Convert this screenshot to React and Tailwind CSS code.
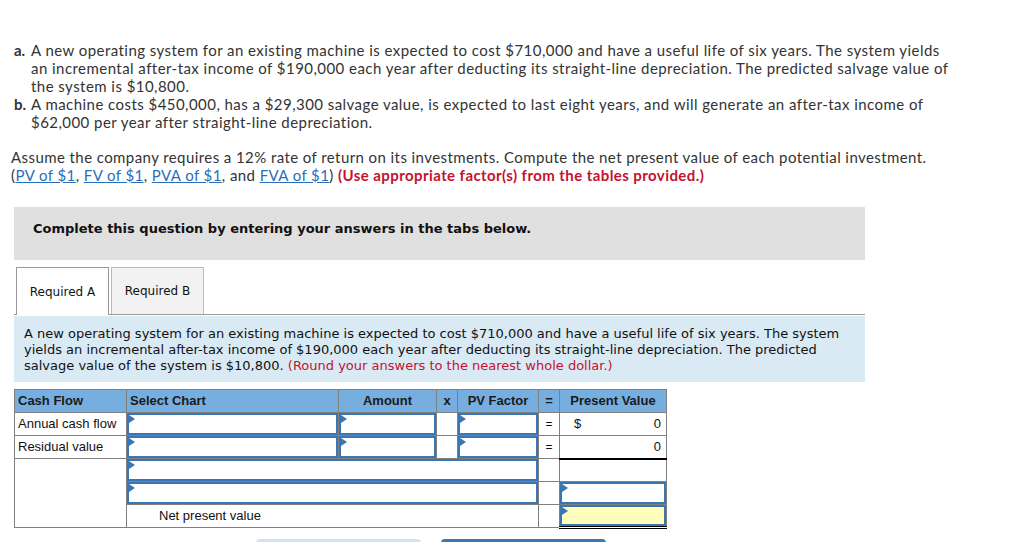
import React from 'react'

const Flag = () => (
    <span className="absolute left-0 top-0 w-0 h-0 border-t-[4px] border-b-[4px] border-l-[6px] border-t-transparent border-b-transparent border-l-[#3a76b3]" />
)

const Field = ({ yellow }) => (
    <div className={`relative h-full w-full border-2 border-[#3a76b3] ${yellow ? 'bg-[#ffffbb]' : 'bg-white'}`}>
        <Flag />
    </div>
)

const Link = ({ children }) => (
    <span className="text-[#2a6ebb] underline">{children}</span>
)

export default function App() {
    const cell = 'border border-[#808080] p-0 h-[23px]'
    return (
        <div className="w-[1009px] h-[542px] overflow-hidden bg-white text-[#333] relative">
            <div className="pt-[41px] pl-[14px] font-['Lato',sans-serif] text-[15px] leading-[18px] tracking-[0.45px] whitespace-nowrap">
                <div className="flex">
                    <span className="font-bold w-[17px] tracking-normal">a.</span>
                    <div>
                        A new operating system for an existing machine is expected to cost $710,000 and have a useful life of six years. The system yields<br />
                        an incremental after-tax income of $190,000 each year after deducting its straight-line depreciation. The predicted salvage value of<br />
                        the system is $10,800.
                    </div>
                </div>
                <div className="flex">
                    <span className="font-bold w-[17px] tracking-normal">b.</span>
                    <div>
                        A machine costs $450,000, has a $29,300 salvage value, is expected to last eight years, and will generate an after-tax income of<br />
                        $62,000 per year after straight-line depreciation.
                    </div>
                </div>
            </div>
            <div className="mt-[17px] pl-[11px] font-['Lato',sans-serif] text-[15px] leading-[18px] tracking-[0.42px] whitespace-nowrap">
                Assume the company requires a 12% rate of return on its investments. Compute the net present value of each potential investment.<br />
                (<Link>PV of $1</Link>, <Link>FV of $1</Link>, <Link>PVA of $1</Link>, and <Link>FVA of $1</Link>) <span className="font-bold text-[#c41230]">(Use appropriate factor(s) from the tables provided.)</span>
            </div>

            <div className="ml-[14px] mt-[23px] w-[851px] h-[53px] bg-[#e0e0e0] pl-[19px] pt-[14px] font-['DejaVu_Sans',sans-serif] font-bold text-[13px] leading-[16px] text-[#111]">
                Complete this question by entering your answers in the tabs below.
            </div>

            <div className="ml-[14px] mt-[7px] w-[851px] flex items-end border-b border-[#999] font-['DejaVu_Sans',sans-serif] text-[12px] text-[#111]">
                <div className="ml-[2px] w-[93px] h-[48px] bg-white border border-b-0 border-[#999] flex items-center justify-center -mb-px">Required A</div>
                <div className="ml-[2px] w-[93px] h-[47px] bg-[#f2f2f2] border border-[#bbb] border-b-0 flex items-center justify-center">Required B</div>
            </div>

            <div className="ml-[14px] mt-[1px] w-[851px] h-[66px] bg-[#d9eaf5] px-[10px] pt-[10px] font-['DejaVu_Sans',sans-serif] text-[13px] leading-[16px] text-[#111] whitespace-nowrap">
                A new operating system for an existing machine is expected to cost $710,000 and have a useful life of six years. The system<br />
                yields an incremental after-tax income of $190,000 each year after deducting its straight-line depreciation. The predicted<br />
                salvage value of the system is $10,800. <span className="text-[#c41230]">(Round your answers to the nearest whole dollar.)</span>
            </div>

            <table className="ml-[14px] mt-[7px] border-collapse font-['Liberation_Sans',sans-serif] text-[13px] text-[#111] table-fixed w-[652px]">
                <colgroup>
                    <col className="w-[112px]" />
                    <col className="w-[212px]" />
                    <col className="w-[98px]" />
                    <col className="w-[21px]" />
                    <col className="w-[81px]" />
                    <col className="w-[21px]" />
                    <col className="w-[107px]" />
                </colgroup>
                <thead>
                    <tr className="bg-[#77aee0] text-[#1a1a1a]">
                        <th className={`${cell} text-left pl-[3px] font-bold`}>Cash Flow</th>
                        <th className={`${cell} text-left pl-[3px] font-bold`}>Select Chart</th>
                        <th className={`${cell} text-center font-bold`}>Amount</th>
                        <th className={`${cell} text-center font-bold`}>x</th>
                        <th className={`${cell} text-center font-bold`}>PV Factor</th>
                        <th className={`${cell} text-center font-bold`}>=</th>
                        <th className={`${cell} text-center font-bold`}>Present Value</th>
                    </tr>
                </thead>
                <tbody>
                    <tr>
                        <td className={`${cell} pl-[3px]`}>Annual cash flow</td>
                        <td className={cell}><Field /></td>
                        <td className={cell}><Field /></td>
                        <td className={cell}></td>
                        <td className={cell}><Field /></td>
                        <td className={`${cell} text-center text-[12px]`}>=</td>
                        <td className={`${cell} px-[5px]`}>
                            <div className="flex justify-between pl-[9px]"><span>$</span><span>0</span></div>
                        </td>
                    </tr>
                    <tr>
                        <td className={`${cell} pl-[3px]`}>Residual value</td>
                        <td className={cell}><Field /></td>
                        <td className={cell}><Field /></td>
                        <td className={cell}></td>
                        <td className={cell}><Field /></td>
                        <td className={`${cell} text-center text-[12px]`}>=</td>
                        <td className={`${cell} px-[5px] text-right border-b-2 border-b-black`}>0</td>
                    </tr>
                    <tr>
                        <td className={cell} rowSpan={3}></td>
                        <td className={cell} colSpan={4}><Field /></td>
                        <td className={cell}></td>
                        <td className={cell}></td>
                    </tr>
                    <tr>
                        <td className={cell} colSpan={4}><Field /></td>
                        <td className={cell}></td>
                        <td className={cell}><Field /></td>
                    </tr>
                    <tr>
                        <td className={`${cell} pl-[32px]`} colSpan={4}>Net present value</td>
                        <td className={cell}></td>
                        <td className={`${cell} border-b-[3px] border-b-black border-double`}><Field yellow /></td>
                    </tr>
                </tbody>
            </table>

            <div className="ml-[256px] mt-[10px] flex gap-[20px]">
                <div className="w-[165px] h-[6px] bg-[#d6e2ee] rounded-t-sm" />
                <div className="w-[165px] h-[6px] bg-[#3a78b4] rounded-t-sm" />
            </div>
        </div>
    )
}
